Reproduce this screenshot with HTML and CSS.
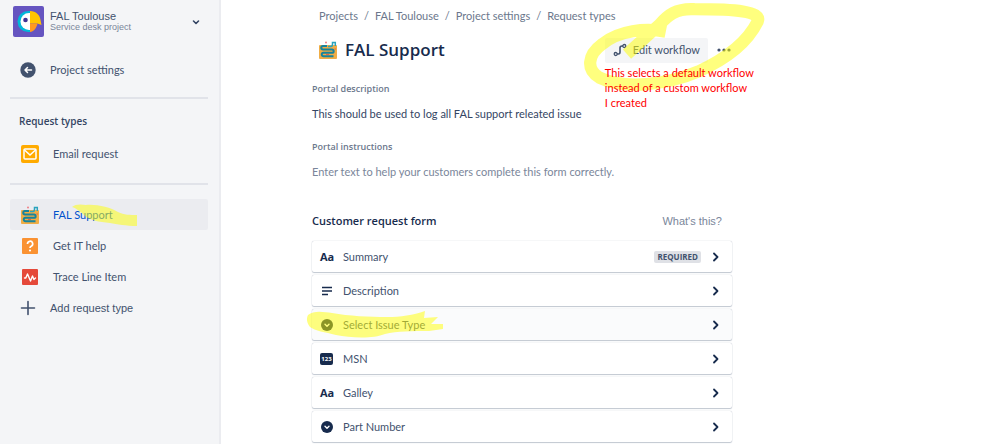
FILE: index.html
```html
<!DOCTYPE html>
<html lang="en">
<head>
<meta charset="utf-8">
<title>FAL Support - Request types</title>
<meta name="viewport" content="width=device-width, initial-scale=1">
<link rel="stylesheet" href="styles.css">
</head>
<body>
<svg class="defs" aria-hidden="true">
  <symbol id="map" viewBox="0 0 18 18">
    <rect x="0" y="4" width="18" height="14" rx="1" fill="#f0ad45"/>
    <path d="M8 5H4a1.700 1.700 0 0 0 0 3.500h9a1.600 1.600 0 0 1 0 3.300H4.500a1.700 1.700 0 0 0 0 3.500h10" fill="none" stroke="#17839c" stroke-width="2"/>
    <path d="M9 5.500h3c1.500 0 1.500-1 1.500-2.500V1.500h2.800v3.500" fill="none" stroke="#2aa3bd" stroke-width="1.500"/>
    <path d="M15.500 8h1.500M7 13.500h3" stroke="#e8604a" stroke-width="1"/>
    <circle cx="7" cy="1.500" r="1" fill="#ee7f86"/>
  </symbol>
  <symbol id="chevron" viewBox="0 0 10 12">
    <path d="M3 2.500l3.500 3.500L3 9.500" fill="none" stroke="#172b4d" stroke-width="1.800" stroke-linecap="round" stroke-linejoin="round"/>
  </symbol>
  <symbol id="select" viewBox="0 0 14 14">
    <circle cx="7" cy="7" r="6" fill="#172b4d"/>
    <path d="M5 6.300l2 2 2-2" fill="none" stroke="#fff" stroke-width="1.400" stroke-linecap="round" stroke-linejoin="round"/>
  </symbol>
</svg>
<div class="app">
  <aside class="sidebar">
    <header class="project">
      <svg class="avatar" viewBox="0 0 31 31" aria-hidden="true">
        <rect width="31" height="31" rx="2" fill="#6554c0"/>
        <path d="M17 5h-2a10.500 10.500 0 0 0 0 21h2z" fill="#00b8d9"/>
        <path d="M17 7h-1a8.500 8.500 0 0 0 0 17h1z" fill="#fff"/>
        <path d="M17 5c6 0 10 4 10.500 9l1 5-4-1.500H17z" fill="#ffc400"/>
        <path d="M17 17.500h7.500c-1 5-4 8-7.500 8.500z" fill="#ff991f"/>
        <circle cx="12.500" cy="14" r="2.300" fill="#403294"/>
      </svg>
      <div class="project-text">
        <span class="project-name">FAL Toulouse</span>
        <span class="project-kind">Service desk project</span>
      </div>
      <button class="switcher" aria-label="Switch project">
        <svg width="10" height="8" viewBox="0 0 10 8"><path d="M2.500 3L5 5.500 7.500 3" fill="none" stroke="#344563" stroke-width="1.600" stroke-linecap="round" stroke-linejoin="round"/></svg>
      </button>
    </header>
    <a class="back" href="#">
      <svg width="16" height="16" viewBox="0 0 16 16" aria-hidden="true"><circle cx="8" cy="8" r="7.700" fill="#42526e"/><path d="M11.500 8H5M7.500 5.500L5 8l2.500 2.500" fill="none" stroke="#fff" stroke-width="1.500" stroke-linecap="round" stroke-linejoin="round"/></svg>
      Project settings
    </a>
    <hr>
    <h2 class="side-title">Request types</h2>
    <nav class="types single" aria-label="Email">
      <a href="#">
        <svg width="18" height="18" viewBox="0 0 18 18" aria-hidden="true"><rect width="18" height="18" rx="2" fill="#ffab00"/><rect x="3" y="4" width="12" height="10" rx="1" fill="none" stroke="#fff" stroke-width="1.500"/><path d="M3.500 5l5.500 5 5.500-5" fill="none" stroke="#fff" stroke-width="1.500"/></svg>
        Email request
      </a>
    </nav>
    <hr>
    <nav class="types" aria-label="Request types">
      <a class="current" href="#" aria-current="page">
        <svg width="18" height="18" aria-hidden="true"><use href="#map"/></svg>
        FAL Support
        <svg class="mark mark-side" viewBox="0 0 66 24" aria-hidden="true"><path d="M0 5C3 2 9 2 14 3C24 2 38 5 46 10C52 13 58 13 65 13V24C54 24 45 22 38 21C27 20 18 18 13 14C9 10 4 6 0 5z"/></svg>
      </a>
      <a href="#">
        <svg width="18" height="18" viewBox="0 0 18 18" aria-hidden="true"><rect x="1" y="1" width="16" height="16" rx="1" fill="#fa9232"/><path d="M6.500 7a2.600 2.600 0 1 1 3.700 2.200c-.8.400-1.200.7-1.200 1.800" fill="none" stroke="#fff" stroke-width="1.700"/><circle cx="9" cy="13.500" r="1.100" fill="#fff"/></svg>
        Get IT help
      </a>
      <a href="#">
        <svg width="18" height="18" viewBox="0 0 18 18" aria-hidden="true"><rect x="1" y="1" width="16" height="16" rx="1" fill="#e5493a"/><path d="M3.500 10h1.300l1.700-4 3 7 2-5 1.400 3.500L14.500 10" fill="none" stroke="#fff" stroke-width="1.400" stroke-linejoin="round" stroke-linecap="round"/></svg>
        Trace Line Item
      </a>
    </nav>
    <button class="add">
      <svg width="16" height="16" viewBox="0 0 16 16" aria-hidden="true"><path d="M8 1.500v13M1.500 8h13" stroke="#42526e" stroke-width="1.600" stroke-linecap="round"/></svg>
      Add request type
    </button>
  </aside>
  <main class="content">
    <nav class="crumbs" aria-label="Breadcrumb">
      <a href="#">Projects</a><span>/</span><a href="#">FAL Toulouse</a><span>/</span><a href="#">Project settings</a><span>/</span><a href="#">Request types</a>
    </nav>
    <div class="heading">
      <svg width="18" height="18" aria-hidden="true"><use href="#map"/></svg>
      <h1>FAL Support</h1>
      <div class="actions">
        <button class="edit">
          <svg width="14" height="14" viewBox="0 0 14 14" aria-hidden="true"><path d="M4 11h1.500c1.500 0 1.500-1 1.500-2V5c0-1.500.5-2 2-2h1" fill="none" stroke="#42526e" stroke-width="1.600"/><circle cx="2.700" cy="11" r="1.500" fill="none" stroke="#42526e" stroke-width="1.300"/><circle cx="11.300" cy="3" r="1.500" fill="none" stroke="#42526e" stroke-width="1.300"/></svg>
          Edit workflow
        </button>
        <button class="more" aria-label="More actions">
          <svg width="16" height="6" viewBox="0 0 16 6"><g fill="#42526e"><circle cx="3" cy="3" r="1.600"/><circle cx="8" cy="3" r="1.600"/><circle cx="13" cy="3" r="1.600"/></g></svg>
        </button>
        <svg class="mark mark-loop" viewBox="0 0 184 94" aria-hidden="true"><path d="M82 31C62 27 36 30 20 43C5 54 4 68 17 76C42 88 84 83 114 70C144 56 162 41 172 21C176 11 150 9 110 9C92 8 84 15 76 24L44 53" fill="none" stroke-width="12"/></svg>
        <p class="note">This selects a default workflow<br>instead of a custom workflow<br>I created</p>
      </div>
    </div>
    <section class="field">
      <h3>Portal description</h3>
      <p>This should be used to log all FAL support releated issue</p>
    </section>
    <section class="field">
      <h3>Portal instructions</h3>
      <p class="empty">Enter text to help your customers complete this form correctly.</p>
    </section>
    <div class="form-head">
      <h2>Customer request form</h2>
      <a href="#">What's this?</a>
    </div>
    <ul class="fields">
      <li><button><span class="glyph">Aa</span><span class="name">Summary</span><span class="badge">REQUIRED</span><svg class="chev" aria-hidden="true"><use href="#chevron"/></svg></button></li>
      <li><button><span class="glyph"><svg width="14" height="14" viewBox="0 0 14 14" aria-hidden="true"><path d="M2 3.500h10M2 7h10M2 10.500h6" stroke="#172b4d" stroke-width="1.600"/></svg></span><span class="name">Description</span><svg class="chev" aria-hidden="true"><use href="#chevron"/></svg></button></li>
      <li><button class="hover"><span class="glyph"><svg width="14" height="14" aria-hidden="true"><use href="#select"/></svg></span><span class="name">Select Issue Type</span><svg class="chev" aria-hidden="true"><use href="#chevron"/></svg></button>
        <svg class="mark mark-row" viewBox="0 0 138 30" aria-hidden="true"><path d="M1 6C7 1 17 3 25 4C42 7 62 8 80 8C94 8 106 6 118 2L117 9L131 8L124 15L136 15V20L122 22C106 22 90 22 78 25C66 30 44 29 29 26C18 23 8 22 3 18C0 14-1 10 1 6z"/></svg></li>
      <li><button><span class="glyph"><span class="digits">123</span></span><span class="name">MSN</span><svg class="chev" aria-hidden="true"><use href="#chevron"/></svg></button></li>
      <li><button><span class="glyph">Aa</span><span class="name">Galley</span><svg class="chev" aria-hidden="true"><use href="#chevron"/></svg></button></li>
      <li><button><span class="glyph"><svg width="14" height="14" aria-hidden="true"><use href="#select"/></svg></span><span class="name">Part Number</span><svg class="chev" aria-hidden="true"><use href="#chevron"/></svg></button></li>
    </ul>
  </main>
</div>
</body>
</html>
```
FILE: styles.css
```css
* { box-sizing: border-box; }

body {
  margin: 0;
  background: #fff;
  color: #42526e;
  font: 11px/16px Lato, "Open Sans", sans-serif;
}

h1, h2, h3, p, ul { margin: 0; padding: 0; }
a { color: inherit; text-decoration: none; }
button {
  padding: 0;
  border: 0;
  background: none;
  color: inherit;
  font: inherit;
  text-align: left;
}
svg { display: block; flex: none; }
.defs { position: absolute; width: 0; height: 0; }

.app { display: flex; min-height: 100vh; }

/* Sidebar */
.sidebar {
  flex: none;
  width: 221px;
  padding: 6px 11px 0 10px;
  background: #f4f5f7;
  border-right: 2px solid #ebecf0;
}
.project {
  display: flex;
  align-items: center;
  gap: 6px;
  padding-left: 3px;
  font-family: "Liberation Sans", Arial, sans-serif;
}
.avatar { width: 31px; height: 31px; }
.project-text { flex: 1; }
.project-name, .project-kind { display: block; white-space: nowrap; }
.project-name { font-size: 11px; line-height: 12px; }
.project-kind { color: #7a869a; font-size: 9px; line-height: 11px; }
.switcher { margin-right: 7px; }
.back, .add {
  display: flex;
  align-items: center;
  gap: 14px;
  height: 32px;
  padding-left: 10px;
}
.back { margin-top: 17px; }
hr {
  height: 2px;
  margin: 11px 0 0;
  border: 0;
  background: #e1e3e9;
}
.side-title {
  padding: 14px 0 0 9px;
  color: #344563;
  font: 600 10px/16px "Open Sans", "Noto Sans", sans-serif;
}
.types a {
  position: relative;
  display: flex;
  align-items: center;
  gap: 14px;
  height: 31px;
  padding-left: 11px;
  border-radius: 2px;
}
.types { padding-top: 14px; }
.types.single { padding: 9px 0 3px; }
.types .current { background: #ebecf0; color: #0052cc; }
.add { width: 100%; height: 31px; font-family: "Liberation Sans", Arial, sans-serif; }

/* Content */
.content {
  flex: 1;
  min-width: 0;
  max-width: 420px;
  margin-left: 91px;
  padding-top: 8px;
}
.crumbs {
  display: flex;
  gap: 6px;
  padding-left: 7px;
  color: #6b778c;
  white-space: nowrap;
}
.heading {
  display: flex;
  align-items: center;
  height: 28px;
  margin-top: 12px;
  padding-left: 7px;
}
h1 {
  flex: 1;
  padding-left: 8px;
  color: #172b4d;
  font: 600 17px/28px "Open Sans", "Noto Sans", sans-serif;
}
.actions {
  position: relative;
  display: flex;
  align-items: center;
  gap: 8px;
}
.edit {
  display: flex;
  align-items: center;
  gap: 6px;
  height: 25px;
  padding: 0 8px;
  border-radius: 2px;
  background: #f4f5f7;
  white-space: nowrap;
}
.note {
  position: absolute;
  top: 27px;
  left: 0;
  color: #f00;
  font: 11px/15px Lato, sans-serif;
  white-space: nowrap;
}
.field { padding-top: 17px; }
.field h3 {
  color: #6b778c;
  font: 600 9px/16px "Open Sans", "Noto Sans", sans-serif;
}
.field p { padding-top: 9px; color: #344563; }
.field .empty { color: #7a869a; }
.form-head {
  display: flex;
  justify-content: space-between;
  align-items: center;
  padding: 33px 10px 0 0;
}
.form-head h2 {
  color: #172b4d;
  font: 600 11px/16px "Open Sans", "Noto Sans", sans-serif;
}
.form-head a { color: #7a869a; font-family: "Liberation Sans", Arial, sans-serif; }
.fields { display: grid; gap: 3px; margin-top: 12px; list-style: none; }
.fields li { position: relative; }
.fields button {
  display: flex;
  align-items: center;
  width: 100%;
  height: 31px;
  padding: 0 11px 0 8px;
  border-radius: 2px;
  background: #fff;
  box-shadow: 0 1px 1px #c1c7d0, 0 0 1px #a5adba;
}
.fields .hover { background: #fafbfc; }
.glyph {
  display: flex;
  width: 23px;
  color: #172b4d;
  font: 700 11px/16px "Open Sans", "Noto Sans", sans-serif;
}
.name { flex: 1; }
.badge {
  margin-right: 10px;
  padding: 0 3px;
  border-radius: 2px;
  background: #dfe1e6;
  font: 700 8px/12px "Open Sans", "Noto Sans", sans-serif;
}
.digits {
  width: 13px;
  border-radius: 2px;
  background: #172b4d;
  color: #fff;
  font-size: 6px;
  line-height: 12px;
  text-align: center;
}
.chev { width: 10px; height: 12px; }

/* Highlighter strokes */
.mark {
  position: absolute;
  overflow: visible;
  fill: #ffff00;
  opacity: 0.5;
  pointer-events: none;
}
.mark-side { top: 3px; left: 62px; width: 66px; height: 24px; }
.mark-loop { top: -38px; left: -23px; width: 188px; height: 96px; fill: none; stroke: #ffff00; }
.mark-row { top: 0; left: -5px; width: 138px; height: 30px; }
```
